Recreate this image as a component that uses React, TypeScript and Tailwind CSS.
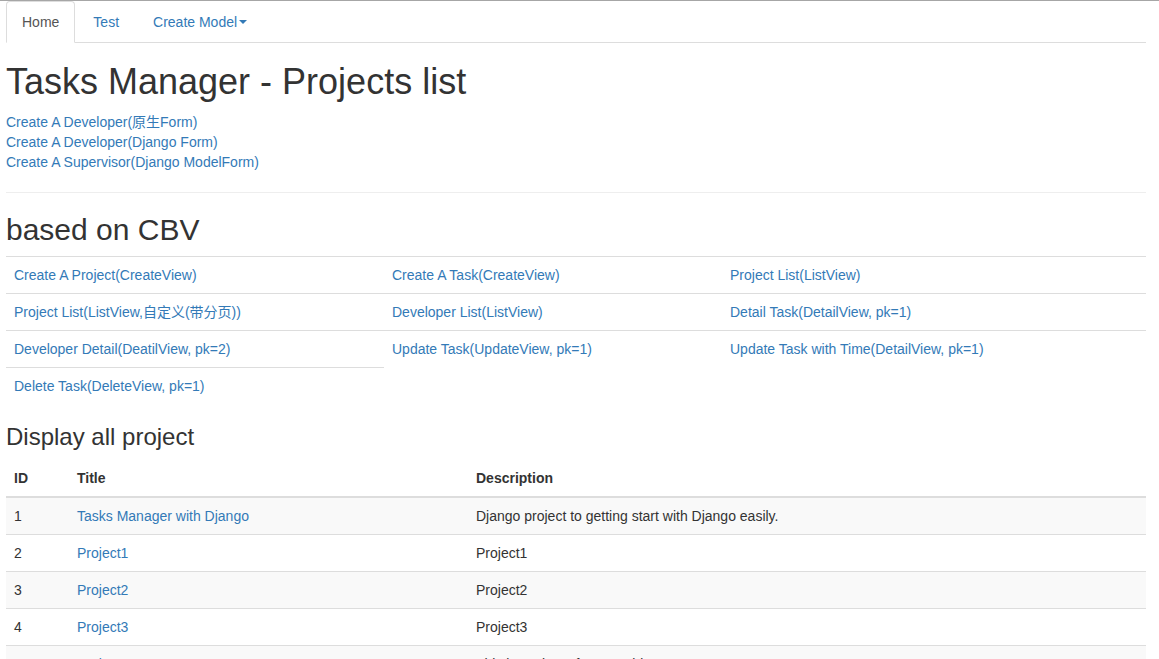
import React from 'react'

const font = { fontFamily: '"Liberation Sans", Arial, "Noto Sans CJK SC", sans-serif' }

const cbvRows: string[][] = [
  ['Create A Project(CreateView)', 'Create A Task(CreateView)', 'Project List(ListView)'],
  ['Project List(ListView,自定义(带分页))', 'Developer List(ListView)', 'Detail Task(DetailView, pk=1)'],
  ['Developer Detail(DeatilView, pk=2)', 'Update Task(UpdateView, pk=1)', 'Update Task with Time(DetailView, pk=1)'],
  ['Delete Task(DeleteView, pk=1)'],
]

const projects = [
  { id: 1, title: 'Tasks Manager with Django', description: 'Django project to getting start with Django easily.' },
  { id: 2, title: 'Project1', description: 'Project1' },
  { id: 3, title: 'Project2', description: 'Project2' },
  { id: 4, title: 'Project3', description: 'Project3' },
  { id: 5, title: 'Project4', description: 'This is Project4 from Covid-19' },
]

function NavTabs() {
  return (
    <ul className="flex border-b border-[#ddd] pl-0">
      <li className="-mb-px">
        <a className="mr-[2px] block rounded-t-[4px] border border-[#ddd] border-b-transparent bg-white px-[15px] py-[10px] leading-5 text-[#555]">
          Home
        </a>
      </li>
      <li className="-mb-px">
        <a className="mr-[2px] block rounded-t-[4px] border border-transparent px-[15px] py-[10px] leading-5 text-[#337ab7]">
          Test
        </a>
      </li>
      <li className="-mb-px">
        <a className="mr-[2px] flex items-center rounded-t-[4px] border border-transparent px-[15px] py-[10px] leading-5 text-[#337ab7]">
          Create Model
          <span className="ml-[2px] inline-block h-0 w-0 border-x-4 border-t-4 border-x-transparent border-t-[#337ab7]" />
        </a>
      </li>
    </ul>
  )
}

export default function App() {
  return (
    <div className="min-h-screen border-t border-[#a6a6a6] bg-white pl-[6px] text-[14px] leading-5 text-[#333]" style={font}>
      <div className="w-[1140px]">
        <NavTabs />

        <h1 className="mt-[19px] mb-[10px] text-[36px] leading-[1.1] font-normal">Tasks Manager - Projects list</h1>
        <div className="flex flex-col text-[#337ab7]">
          <a>Create A Developer(原生Form)</a>
          <a>Create A Developer(Django Form)</a>
          <a>Create A Supervisor(Django ModelForm)</a>
        </div>

        <hr className="my-5 border-t border-[#eee]" />

        <h2 className="mt-5 mb-[10px] text-[30px] leading-[1.1] font-normal">based on CBV</h2>
        <table className="w-full border-collapse">
          <colgroup>
            <col className="w-[378px]" />
            <col className="w-[338px]" />
            <col className="w-[424px]" />
          </colgroup>
          <tbody>
            {cbvRows.map((row, i) => (
              <tr key={i}>
                {row.map((cell) => (
                  <td key={cell} className="border-t border-[#ddd] p-2 align-top text-[#337ab7]">
                    {cell}
                  </td>
                ))}
              </tr>
            ))}
          </tbody>
        </table>

        <h3 className="mt-5 mb-[10px] text-[24px] leading-[1.1] font-normal">Display all project</h3>
        <table className="w-full border-collapse">
          <colgroup>
            <col className="w-[63px]" />
            <col className="w-[399px]" />
            <col />
          </colgroup>
          <thead>
            <tr>
              <th className="border-b-2 border-[#ddd] p-2 text-left font-bold">ID</th>
              <th className="border-b-2 border-[#ddd] p-2 text-left font-bold">Title</th>
              <th className="border-b-2 border-[#ddd] p-2 text-left font-bold">Description</th>
            </tr>
          </thead>
          <tbody>
            {projects.map((p, i) => (
              <tr key={p.id} className={i % 2 === 0 ? 'bg-[#f9f9f9]' : 'bg-white'}>
                <td className="border-t border-[#ddd] p-2">{p.id}</td>
                <td className="border-t border-[#ddd] p-2 text-[#337ab7]">{p.title}</td>
                <td className="border-t border-[#ddd] p-2">{p.description}</td>
              </tr>
            ))}
          </tbody>
        </table>
      </div>
    </div>
  )
}
